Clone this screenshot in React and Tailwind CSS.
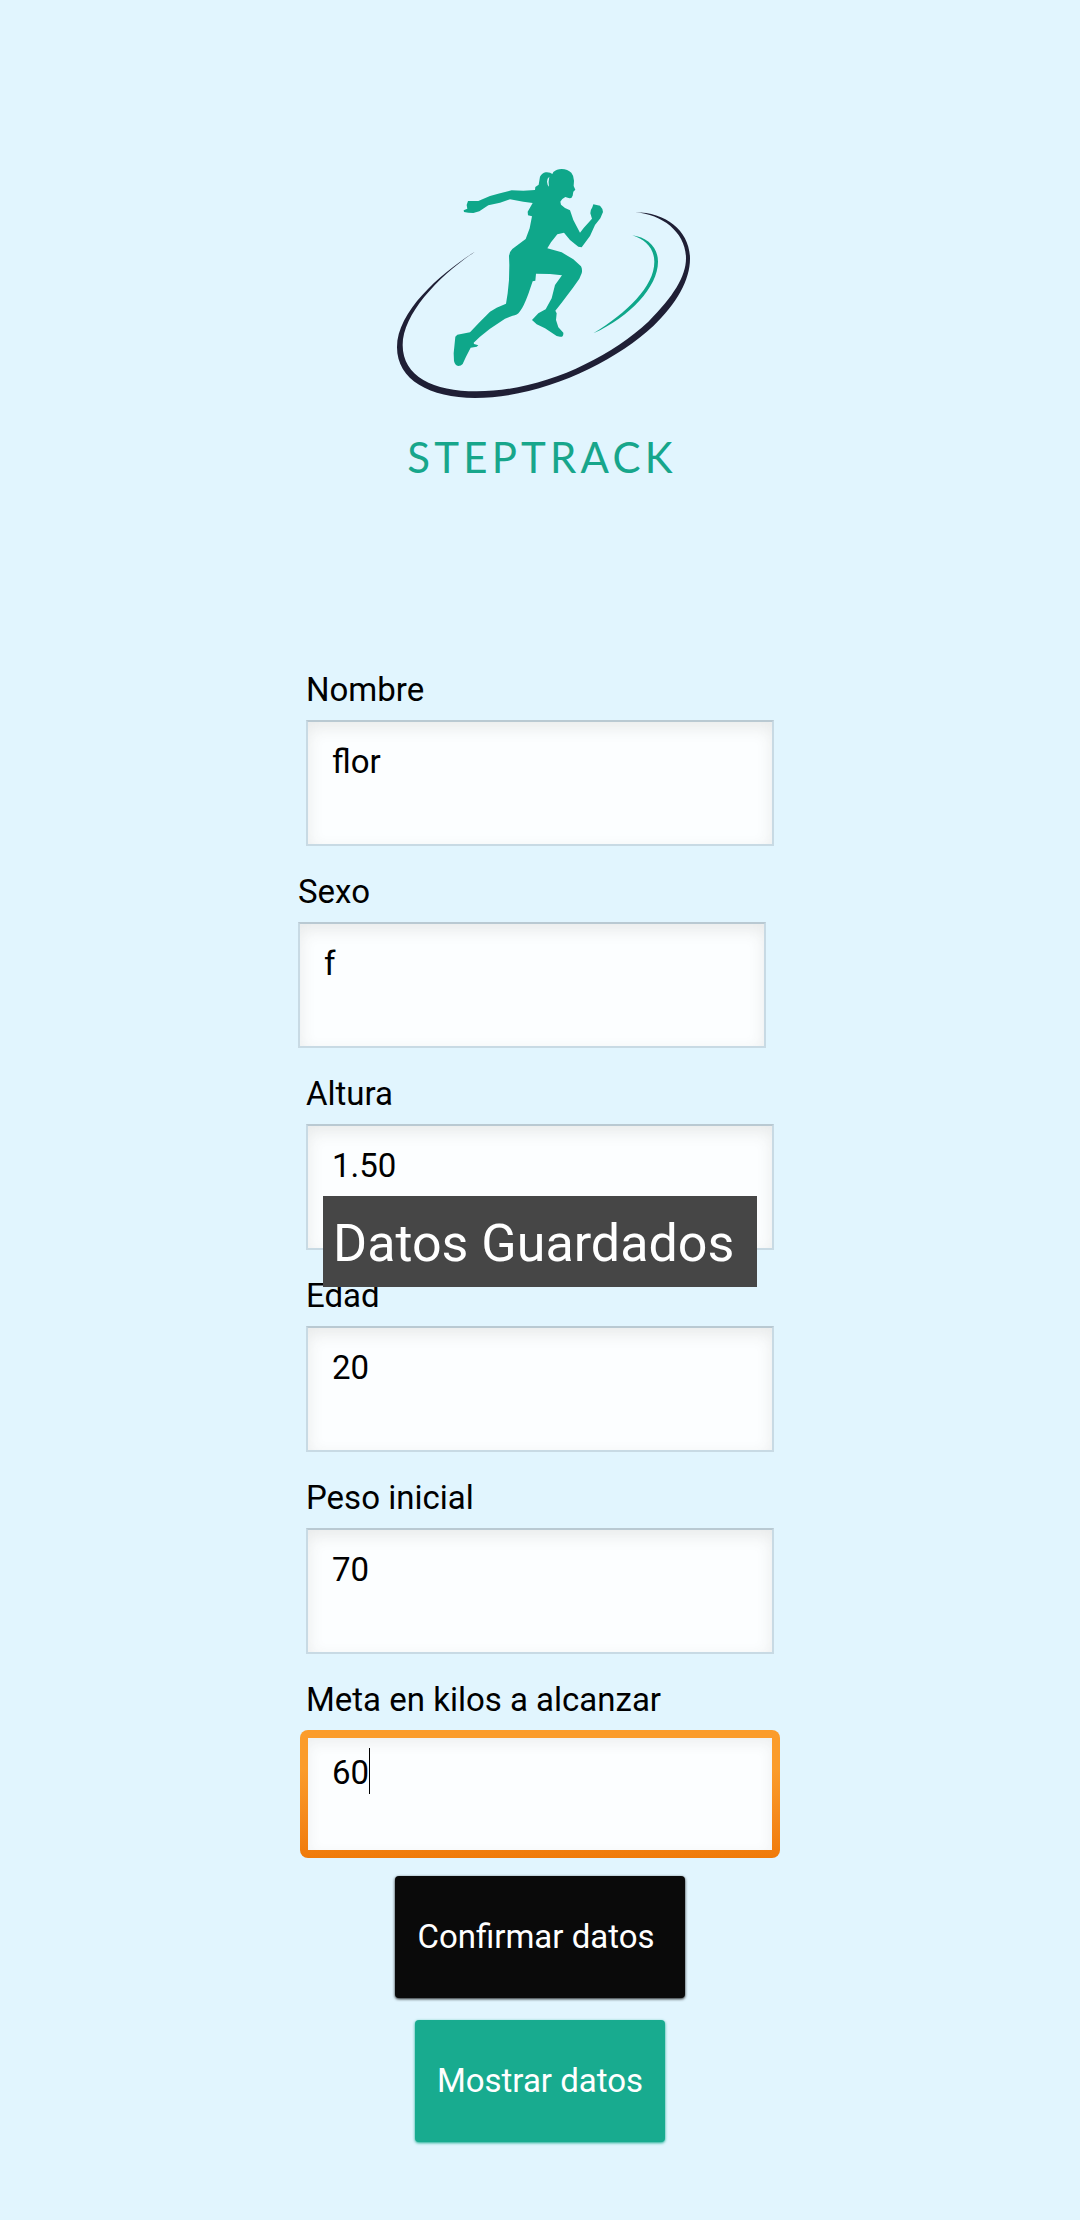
import React from "react";

function Logo() {
  return (
    <div className="flex flex-col items-center">
      <svg viewBox="0 54 960 696" className="h-[232px] w-80" role="img" aria-label="StepTrack">
        <path
          fill="#1f1f35"
          d="M285 305 C190 365 51 480 51 592 C51 690 150 744 285 744 C480 744 700 640 820 528 C890 460 930 390 930 326 C930 245 860 187 765 187 C850 193 918 250 918 325 C918 380 880 440 805 515 C680 630 480 724 290 724 C160 724 68 680 68 585 C68 490 180 375 285 305Z"
        />
        <path
          fill="#0fa78a"
          d="M757 256 C800 262 834 290 834 335 C834 410 750 500 640 550 C740 488 823 410 823 335 C823 295 795 268 757 256Z"
        />
        <path
          fill="#0fa78a"
          d="M520 66 Q530 57 545 57 Q563 58 574 68 Q582 78 582 92 L581 108 L586 119 L580 125 L578 137 Q576 145 568 145 L556 141 Q544 147 541 155 L543 164 L555 174 L570 181 L580 210 L600 248 L611 234 L636 206 L631 190 Q632 178 637 172 L640 163 L660 167 Q669 176 669 186 L661 205 L645 225 L630 258 L605 292 L595 290 L570 270 L552 248 L532 253 L513 277 L502 295 L545 307 L580 328 L603 349 Q608 358 605 370 L598 386 L580 412 L545 458 L526 482 L530 490 L528 510 L535 532 L550 548 Q551 562 540 560 L530 558 L495 535 L470 523 L456 510 L475 490 L497 478 L515 445 L525 405 L546 376 L510 372 L468 371 L466 392 L458 394 L445 432 Q431 470 420 484 Q411 497 398 497 L375 506 L330 536 L300 560 L281 578 L282 582 L295 586 L290 590 L272 593 L258 620 L248 642 Q243 648 235 648 Q225 646 222 633 L221 610 L226 560 L232 554 L270 547 L300 515 L330 485 L350 473 L378 461 L383 430 L387 390 L388 345 L387 318 Q389 304 397 297 L437 267 L449 235 L456 199 L444 196 L443 185 L449 175 L458 159 L430 155 L390 148 L360 158 L325 166 L298 184 L280 189 L265 188 L252 186 L251 181 L262 176 L260 165 L264 153 L295 153 L330 138 L360 130 L395 121 L430 122 L465 120 L466 111 L476 104 L480 80 Q486 69 497 67 Q511 66 517 72Z"
        />
        <path fill="#e1f5fe" d="M508 80 Q501 84 501 95 Q502 106 507 110 Q504 96 508 80Z" />
      </svg>
      <p className="mt-8 pl-1 font-[Lato] text-[42px] leading-[50px] tracking-widest text-[#17a68b]">STEPTRACK</p>
    </div>
  );
}

const INPUT_TEXT = "w-full bg-[#fcfeff] pt-5 pb-[62px] pl-6 pr-6 text-[33px] leading-[40px] text-black outline-none";

function Field({ id, label, value, className = "", children }) {
  return (
    <div className={`relative w-[468px] max-w-full ${className}`}>
      <label htmlFor={id} className="mb-2.5 block text-[33px] leading-[40px]">
        {label}
      </label>
      <input
        id={id}
        type="text"
        defaultValue={value}
        className={`${INPUT_TEXT} block border-2 border-[#c8dae4] border-t-[#b9c9d2] shadow-[inset_0_6px_16px_rgba(60,60,50,0.10)]`}
      />
      {children}
    </div>
  );
}

function FocusedField({ id, label, value }) {
  return (
    <div className="w-[468px] max-w-full">
      <label htmlFor={id} className="mb-2.5 block text-[33px] leading-[40px]">
        {label}
      </label>
      <div className="relative -mx-1.5 rounded-lg bg-linear-to-b from-[#fb9c2b] from-30% to-[#f07a08] p-2">
        <input
          id={id}
          type="text"
          defaultValue={value}
          className="block h-28 w-full bg-[#fcfeff] pt-3.5 pb-[58px] pl-6 pr-6 text-[33px] leading-[40px] text-black shadow-[inset_0_5px_14px_rgba(60,60,70,0.08)] outline-none"
        />
        <span className="absolute top-[18px] left-[69px] h-[46px] w-px bg-black" />
      </div>
    </div>
  );
}

export default function App() {
  return (
    <main className="flex min-h-screen flex-col items-center bg-[#e1f5fe] px-4 pt-42 pb-16 font-[Roboto,sans-serif] text-black">
      <Logo />
      <form className="mt-[188px] flex w-full flex-col items-center" onSubmit={(e) => e.preventDefault()}>
        <div className="flex w-full flex-col items-center gap-[26px]">
          <Field id="nombre" label="Nombre" value="flor" />
          <Field id="sexo" label="Sexo" value="f" className="mr-4" />
          <Field id="altura" label="Altura" value="1.50">
            <div
              role="status"
              className="absolute top-[122px] left-[17px] z-10 w-[434px] bg-[#464646] px-2.5 pt-4 pb-[11px] text-[52px] leading-[64px] whitespace-nowrap text-white"
            >
              Datos Guardados
            </div>
          </Field>
          <Field id="edad" label="Edad" value="20" />
          <Field id="peso" label="Peso inicial" value="70" />
          <FocusedField id="meta" label="Meta en kilos a alcanzar" value="60" />
        </div>
        <button
          type="submit"
          className="mt-[18px] rounded-sm bg-[#0a0a0a] py-[41px] pr-[30px] pl-[22px] text-[33px] leading-[40px] text-white shadow-[0_1px_3px_rgba(0,0,0,0.9)]"
        >
          Confirmar datos
        </button>
        <button
          type="button"
          className="mt-[22px] rounded-sm bg-[#18ab8f] px-[22px] py-[41px] text-[33px] leading-[40px] text-white shadow-[0_1px_3px_#18ab8f]"
        >
          Mostrar datos
        </button>
      </form>
    </main>
  );
}
